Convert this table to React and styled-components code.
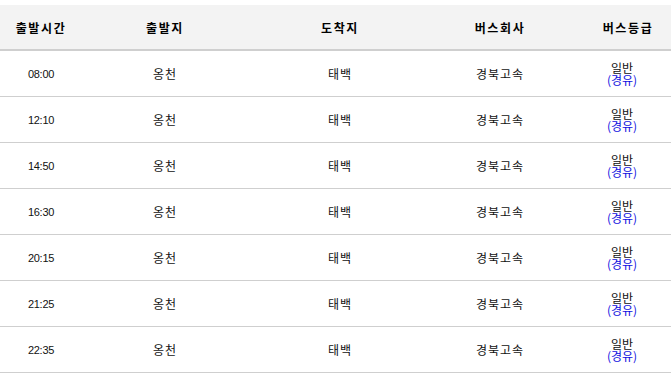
import React from "react";
import styled, { createGlobalStyle } from "styled-components";

const rows = [
  { time: "08:00", from: "옹천", to: "태백", company: "경북고속" },
  { time: "12:10", from: "옹천", to: "태백", company: "경북고속" },
  { time: "14:50", from: "옹천", to: "태백", company: "경북고속" },
  { time: "16:30", from: "옹천", to: "태백", company: "경북고속" },
  { time: "20:15", from: "옹천", to: "태백", company: "경북고속" },
  { time: "21:25", from: "옹천", to: "태백", company: "경북고속" },
  { time: "22:35", from: "옹천", to: "태백", company: "경북고속" },
];

export default function App() {
  return (
    <>
      <GlobalStyle />
      <Table>
        <HeaderRow>
          <HeadCell>출발시간</HeadCell>
          <HeadCell>출발지</HeadCell>
          <HeadCell>도착지</HeadCell>
          <HeadCell>버스회사</HeadCell>
          <HeadCell>버스등급</HeadCell>
        </HeaderRow>
        {rows.map((r) => (
          <Row key={r.time}>
            <TimeCell>{r.time}</TimeCell>
            <Cell>{r.from}</Cell>
            <Cell>{r.to}</Cell>
            <Cell>{r.company}</Cell>
            <GradeCell>
              <span>일반</span>
              <Via>(경유)</Via>
            </GradeCell>
          </Row>
        ))}
      </Table>
    </>
  );
}

// - Styled Components - //
const GlobalStyle = createGlobalStyle`
  html, body {
    margin: 0;
    padding: 0;
    background: #fff;
    overflow: hidden;
  }
  body {
    font-family: "Noto Sans CJK KR", "Noto Sans", sans-serif;
    color: #111;
  }
`;

const Table = styled.div`
  width: 688px;
  margin-top: 5px;
`;

const HeaderRow = styled.div`
  display: grid;
  grid-template-columns: 82px 166px 184px 136px 120px;
  height: 44px;
  background: #f3f3f3;
  border-bottom: 2px solid #cfcfcf;
  align-items: center;
`;

const HeadCell = styled.div`
  text-align: center;
  font-size: 12px;
  font-weight: bold;
  letter-spacing: 1.6px;
  color: #000;
`;

// Rows
const Row = styled.div`
  display: grid;
  grid-template-columns: 82px 166px 184px 136px 120px;
  height: 45px;
  border-bottom: 1px solid #cfcfcf;
  align-items: center;
`;

const Cell = styled.div`
  text-align: center;
  font-size: 12px;
  letter-spacing: 0.9px;
  color: #111;
`;

const TimeCell = styled(Cell)`
  font-family: "Liberation Sans", Arial, sans-serif;
  font-size: 11px;
  letter-spacing: -0.3px;
`;

const GradeCell = styled.div`
  display: flex;
  flex-direction: column;
  align-items: center;
  font-size: 12px;
  line-height: 12px;
  margin-right: 12px;
  color: #111;
`;

const Via = styled.span`
  color: #1010e0;
`;
